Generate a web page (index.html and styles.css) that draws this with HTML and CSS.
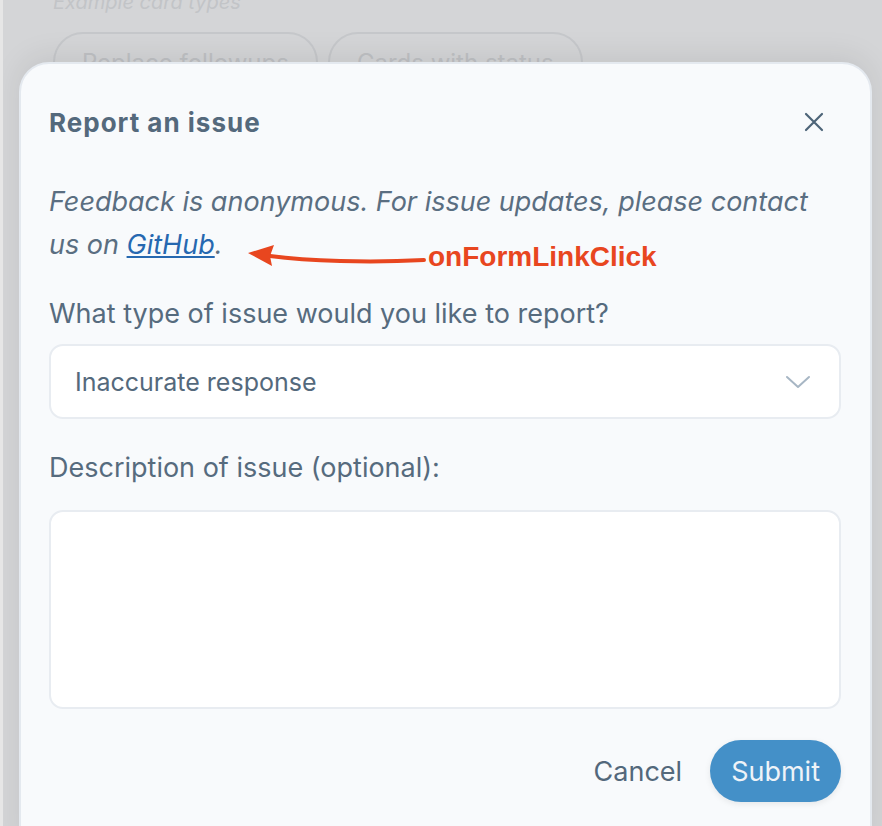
FILE: index.html
```html
<!DOCTYPE html>
<html>
<head>
    <title>Report an issue</title>
    <link rel="stylesheet" href="styles.css">
</head>
<body>
    <div class="page">
        <div class="backdrop">
            <p class="section-hint">Example card types</p>
            <div class="chips">
                <span class="chip">Replace followups</span>
                <span class="chip">Cards with status</span>
            </div>
        </div>

        <div class="modal">
            <div class="modal-header">
                <h1>Report an issue</h1>
                <button class="close" aria-label="Close">
                    <svg width="20" height="20" viewBox="0 0 20 20">
                        <path d="M2 2 L18 18 M18 2 L2 18" stroke="#4d6478" stroke-width="2.2" stroke-linecap="round" fill="none"/>
                    </svg>
                </button>
            </div>

            <div class="intro-wrap">
                <p class="intro">
                    Feedback is anonymous. For issue updates, please contact us on <a href="#">GitHub</a>.
                </p>
                <div class="callout">
                    <svg class="arrow" width="180" height="30" viewBox="0 0 180 30">
                        <path d="M176 18 C120 21 60 19 22 14" stroke="#e8461f" stroke-width="4" fill="none" stroke-linecap="round"/>
                        <path d="M0 11 L26 3 L22 14 L24 24 Z" fill="#e8461f"/>
                    </svg>
                    <span class="callout-label">onFormLinkClick</span>
                </div>
            </div>

            <label class="field-label">What type of issue would you like to report?</label>
            <div class="select">
                <span>Inaccurate response</span>
                <svg width="26" height="16" viewBox="0 0 26 16">
                    <path d="M2 3 L13 13 L24 3" stroke="#a7b6c4" stroke-width="2" fill="none" stroke-linecap="round" stroke-linejoin="round"/>
                </svg>
            </div>

            <label class="field-label">Description of issue (optional):</label>
            <div class="textarea"></div>

            <div class="actions">
                <button class="cancel">Cancel</button>
                <button class="submit">Submit</button>
            </div>
        </div>
    </div>
</body>
</html>
```

FILE: styles.css
```css
body {
    margin: 0;
    padding: 0;
    font-family: 'Inter', 'Liberation Sans', sans-serif;
    background-color: #d4d5d7;
    overflow: hidden;
}
.page {
    position: relative;
    width: 882px;
    height: 826px;
    border-left: 3px solid #e6e6e6;
    box-sizing: border-box;
    overflow: hidden;
}
.backdrop {
    padding: 0 0 0 50px;
}
.section-hint {
    margin: 0;
    height: 16px;
    line-height: 4px;
    font-size: 20px;
    font-style: italic;
    color: #c2c4c7;
}
.chips {
    display: flex;
    gap: 10px;
    margin-top: 16px;
}
.chip {
    display: inline-block;
    padding: 14px 27px;
    border: 2px solid #c6c8cb;
    border-radius: 30px;
    font-size: 24px;
    color: #bfc1c4;
}
.modal {
    position: absolute;
    left: 16px;
    top: 62px;
    width: 853px;
    height: 800px;
    box-sizing: border-box;
    padding: 0 29px 0 28px;
    background-color: #f8fafc;
    border: 2px solid #e4e9ef;
    border-radius: 30px;
    box-shadow: 0 -6px 30px rgba(0, 0, 0, 0.08);
}
.modal-header {
    display: flex;
    justify-content: space-between;
    align-items: center;
    height: 116px;
}
.modal-header h1 {
    margin: 0;
    font-size: 26px;
    font-weight: bold;
    letter-spacing: 1px;
    color: #54697c;
}
.close {
    background: none;
    border: none;
    padding: 0;
    margin-right: 17px;
    width: 20px;
    height: 20px;
    cursor: pointer;
}
.intro-wrap {
    position: relative;
}
.intro {
    margin: 0;
    font-size: 27px;
    font-style: italic;
    line-height: 43px;
    color: #5a6e81;
}
.intro a {
    color: #2668b0;
}
.callout {
    position: absolute;
    left: 199px;
    bottom: -7px;
    display: flex;
    align-items: center;
}
.arrow {
    display: block;
}
.callout-label {
    font-family: 'Liberation Sans', Arial, sans-serif;
    font-size: 28px;
    font-weight: bold;
    color: #e8461f;
}
.field-label {
    display: block;
    margin-top: 31px;
    font-size: 27px;
    color: #566b7e;
}
.select {
    display: flex;
    justify-content: space-between;
    align-items: center;
    margin-top: 14px;
    height: 75px;
    box-sizing: border-box;
    padding: 0 28px 0 24px;
    background: #ffffff;
    border: 2px solid #e8ecf1;
    border-radius: 14px;
    font-size: 25px;
    color: #54697c;
}
.select + .field-label {
    margin-top: 32px;
}
.textarea {
    margin-top: 26px;
    height: 199px;
    background: #ffffff;
    border: 2px solid #e8ecf1;
    border-radius: 14px;
    box-sizing: border-box;
}
.actions {
    display: flex;
    justify-content: flex-end;
    align-items: center;
    gap: 28px;
    margin-top: 31px;
}
.cancel {
    background: none;
    border: none;
    padding: 0;
    font-family: inherit;
    font-size: 27px;
    color: #53687b;
    cursor: pointer;
}
.submit {
    height: 62px;
    padding: 0 21px;
    border: none;
    border-radius: 31px;
    background-color: #4490c8;
    font-family: inherit;
    font-size: 27px;
    color: #eef3f8;
    cursor: pointer;
    box-shadow: 0 2px 6px rgba(0, 0, 0, 0.08);
}
```
